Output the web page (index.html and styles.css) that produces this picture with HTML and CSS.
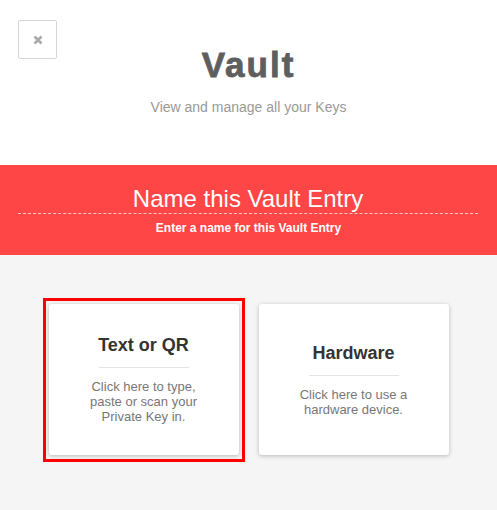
FILE: index.html
```html
<!DOCTYPE html>
<html lang="en">
<head>
  <meta charset="UTF-8">
  <meta name="viewport" content="width=device-width, initial-scale=1.0">
  <title>Vault</title>
  <link rel="stylesheet" href="styles.css">
</head>
<body>
  <!-- Page header -->
  <div class="header">
    <button class="close-btn" aria-label="Close">
      <svg width="10" height="10" viewBox="0 0 10 10">
        <path d="M1.5 1.5 L8.5 8.5 M8.5 1.5 L1.5 8.5" stroke="#aaa" stroke-width="2.6" stroke-linecap="butt" />
      </svg>
    </button>
    <h1>Vault</h1>
    <p class="subtitle">View and manage all your Keys</p>
  </div>

  <!-- Step banner -->
  <div class="banner">
    <h2>Name this Vault Entry</h2>
    <p>Enter a name for this Vault Entry</p>
  </div>

  <!-- Key source choices -->
  <div class="choices">
    <div class="selected">
      <div class="card">
        <h3>Text or QR</h3>
        <hr>
        <p>Click here to type,<br>paste or scan your<br>Private Key in.</p>
      </div>
    </div>
    <div class="card">
      <h3>Hardware</h3>
      <hr>
      <p>Click here to use a<br>hardware device.</p>
    </div>
  </div>
</body>
</html>
```

FILE: styles.css
```css
body {
  font-family: "Liberation Sans", Arial, sans-serif;
  margin: 0;
  padding: 0;
  background-color: #f5f5f5;
  min-height: 510px;
}

.header {
  position: relative;
  background-color: #fff;
  text-align: center;
  padding: 45px 0 50px;
}

.close-btn {
  position: absolute;
  top: 20px;
  left: 18px;
  width: 39px;
  height: 39px;
  padding: 0;
  background: #fff;
  border: 1px solid #d6d6d6;
  border-radius: 2px;
  display: flex;
  align-items: center;
  justify-content: center;
}

.close-btn svg {
  display: block;
}

.header h1 {
  margin: 0;
  font-size: 35px;
  line-height: 40px;
  font-weight: bold;
  letter-spacing: 2px;
  color: #5e5e5e;
  -webkit-text-stroke: 0.8px #5e5e5e;
}

.subtitle {
  margin: 14px 0 0;
  font-size: 14px;
  line-height: 16px;
  color: #999;
}

.banner {
  background-color: #ff4646;
  color: #fff;
  text-align: center;
  padding: 20px 0;
}

.banner h2 {
  margin: 0 19px 0 18px;
  font-size: 24px;
  font-weight: normal;
  line-height: 28px;
  border-bottom: 1px dashed rgba(255, 255, 255, 0.7);
}

.banner p {
  margin: 7px 0 0;
  font-size: 12px;
  font-weight: bold;
  line-height: 14px;
}

.choices {
  display: flex;
  justify-content: center;
  align-items: flex-start;
  gap: 20px;
  padding-top: 49px;
}

/* highlighted choice: square red frame around the card */
.selected {
  border: 3px solid #f00;
  padding: 3px 3px 4px;
  margin: -6px -6px -7px;
}

.card {
  width: 190px;
  height: 151px;
  background-color: #fff;
  border-radius: 3px;
  box-shadow: 0 1px 4px rgba(0, 0, 0, 0.25);
  display: flex;
  flex-direction: column;
  align-items: center;
  justify-content: center;
  text-align: center;
}

.card h3 {
  margin: 0 0 11px;
  font-size: 18px;
  line-height: 21px;
  color: #333;
}

.card hr {
  width: 90px;
  margin: 0;
  border: 0;
  border-top: 1px solid #e3e3e3;
}

.card p {
  margin: 11px 0 0;
  font-size: 13px;
  line-height: 15px;
  color: #777;
}
```
